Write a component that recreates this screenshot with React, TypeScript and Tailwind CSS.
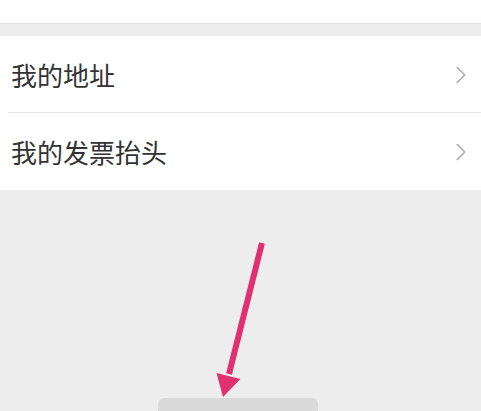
import { ChevronRight } from "lucide-react";

const rows = ["我的地址", "我的发票抬头"];

function Row({ label, last }: { label: string; last?: boolean }) {
  return (
    <div className="relative flex h-[77px] items-center justify-between pl-[11px] pr-[5px]">
      <span className="text-[26px] leading-none text-[#333]">{label}</span>
      <ChevronRight className="text-[#ababab]" size={30} strokeWidth={1.3} />
      {last ? null : <div className="absolute bottom-0 left-[8px] right-0 h-px bg-[#e6e6e6]" />}
    </div>
  );
}

export default function App() {
  return (
    <div
      className="relative flex h-[411px] w-[481px] flex-col overflow-hidden bg-[#ededed]"
      style={{ fontFamily: '"Noto Sans CJK SC", "Noto Sans", sans-serif' }}
    >
      <div className="h-[23px] bg-white" />
      <div className="h-[13px] border-t border-[#e2e2e2] bg-[#ededed]" />
      <div className="bg-white">
        {rows.map((label, i) => (
          <Row key={label} label={label} last={i === rows.length - 1} />
        ))}
      </div>
      <div className="flex flex-1 flex-col">
        <div className="mt-auto ml-[158px] h-[13px] w-[160px] rounded-t-[6px] bg-[#dadada]" />
      </div>
      <svg className="pointer-events-none absolute inset-0" width="481" height="411" viewBox="0 0 481 411">
        <line x1="262" y1="243" x2="229" y2="374" stroke="#e0306f" strokeWidth="6" />
        <polygon points="223,397 240.5,379 216.5,373" fill="#e0306f" />
      </svg>
    </div>
  );
}
